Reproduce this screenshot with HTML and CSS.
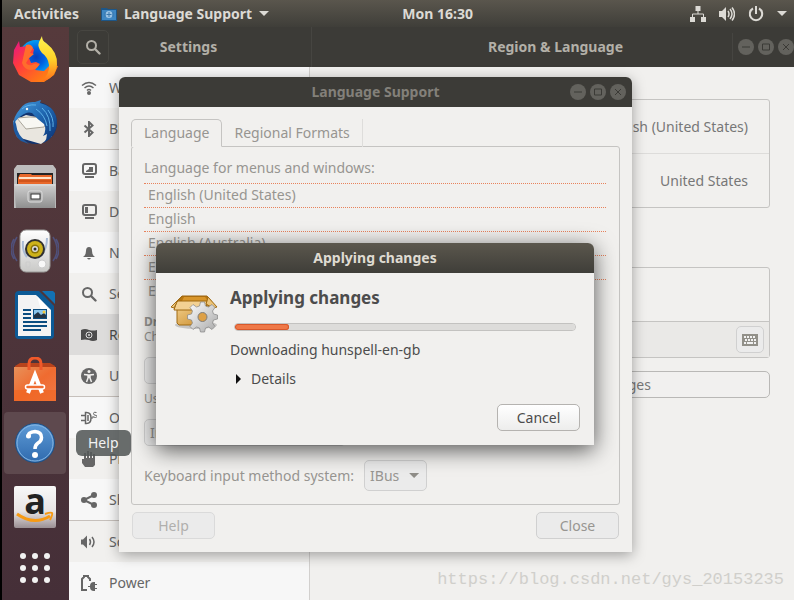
FILE: index.html
```html
<!DOCTYPE html>
<html lang="en">
<head>
<meta charset="utf-8">
<meta name="viewport" content="width=device-width, initial-scale=1">
<title>Language Support</title>
<link rel="stylesheet" href="styles.css">
</head>
<body>
<svg class="defs" aria-hidden="true">
  <defs>
    <linearGradient id="ffBody" x1="0" y1="0" x2="1" y2="1"><stop offset="0" stop-color="#e31587"/><stop offset=".35" stop-color="#ff3a3f"/><stop offset="1" stop-color="#ff9a00"/></linearGradient>
    <linearGradient id="ffTail" x1="0" y1="0" x2="0" y2="1"><stop offset="0" stop-color="#fff44f"/><stop offset=".5" stop-color="#ffd32a"/><stop offset="1" stop-color="#ff6a1a"/></linearGradient>
    <radialGradient id="ffGlobe"><stop offset="0" stop-color="#0a3fb8"/><stop offset=".5" stop-color="#0060e0"/><stop offset="1" stop-color="#00a0f5"/></radialGradient>
    <linearGradient id="tb" x1="0" y1="0" x2="1" y2="1"><stop offset="0" stop-color="#4aa0e0"/><stop offset=".5" stop-color="#1f66b0"/><stop offset="1" stop-color="#0b2f70"/></linearGradient>
    <linearGradient id="steel" x1="0" y1="0" x2="0" y2="1"><stop offset="0" stop-color="#d0d0d0"/><stop offset="1" stop-color="#8f8f8f"/></linearGradient>
    <linearGradient id="white" x1="0" y1="0" x2="0" y2="1"><stop offset="0" stop-color="#ffffff"/><stop offset="1" stop-color="#c9c9c7"/></linearGradient>
    <linearGradient id="bag" x1="0" y1="0" x2="1" y2="1"><stop offset="0" stop-color="#e8915a"/><stop offset=".5" stop-color="#ef6b30"/><stop offset="1" stop-color="#ee7a48"/></linearGradient>
    <linearGradient id="help" x1="0" y1="0" x2="0" y2="1"><stop offset="0" stop-color="#5e9bd6"/><stop offset="1" stop-color="#2f6aae"/></linearGradient>
    <linearGradient id="amz" x1="0" y1="0" x2="0" y2="1"><stop offset="0" stop-color="#f8f8f8"/><stop offset=".6" stop-color="#e8e4e4"/><stop offset="1" stop-color="#9a8f93"/></linearGradient>
    <linearGradient id="box" x1="0" y1="0" x2="1" y2="1"><stop offset="0" stop-color="#f2cf8c"/><stop offset="1" stop-color="#c98a28"/></linearGradient>
    <linearGradient id="gear" x1="0" y1="0" x2="1" y2="1"><stop offset="0" stop-color="#ffffff"/><stop offset="1" stop-color="#a8a8a8"/></linearGradient>
    <symbol id="i-search" viewBox="0 0 16 16"><circle cx="6.5" cy="6.5" r="4.5" fill="none" stroke="currentColor" stroke-width="2"/><path d="M10 10l4.5 4.5" stroke="currentColor" stroke-width="2.4" stroke-linecap="round"/></symbol>
    <symbol id="i-min" viewBox="0 0 16 16"><circle cx="8" cy="8" r="8" class="disc"/><path d="M4 8h8" class="mark"/></symbol>
    <symbol id="i-max" viewBox="0 0 16 16"><circle cx="8" cy="8" r="8" class="disc"/><path d="M4.5 5h7v6h-7z" class="mark"/></symbol>
    <symbol id="i-close" viewBox="0 0 16 16"><circle cx="8" cy="8" r="8" class="disc"/><path d="M5 5l6 6M11 5l-6 6" class="mark"/></symbol>
  </defs>
</svg>

<header class="topbar">
  <button class="top-item">Activities</button>
  <button class="top-item app-menu">
    <svg width="16" height="14" viewBox="0 0 16 14"><path d="M0 1h6l1 1h9v12H0z" fill="#1d5687"/><path d="M1 3h14v10H1z" fill="#3f87c2"/><circle cx="8" cy="7.500" r="3.500" fill="#9cc4e4"/><path d="M8 5v5M5.500 7.500h5M4 5v5M12 5v5" stroke="#3a78ad" fill="none"/></svg>
    Language Support
    <svg width="10" height="5" viewBox="0 0 10 5"><path d="M0 0h10L5 5z" fill="currentColor"/></svg>
  </button>
  <button class="top-item clock">Mon 16:30</button>
  <button class="top-item tray" aria-label="System menu">
    <svg width="16" height="16" viewBox="0 0 16 16"><path d="M5.500 0h5v5h-5zM0 11h5v5H0zM11 11h5v5h-5z" fill="currentColor"/><path d="M8 5v3M2.500 11V8h11v3" fill="none" stroke="currentColor"/></svg>
    <svg width="16" height="16" viewBox="0 0 16 16"><path d="M0 5h3l4-4v14l-4-4H0z" fill="currentColor"/><path d="M9 5q2 3 0 6M11 3q4 5 0 10M13 1.500q5 6.500 0 13" fill="none" stroke="currentColor" stroke-width="1.500"/></svg>
    <svg width="16" height="16" viewBox="0 0 16 16"><path d="M5 2.500a6.200 6.200 0 1 0 6 0M8 0v8" fill="none" stroke="currentColor" stroke-width="2"/></svg>
    <svg width="10" height="5" viewBox="0 0 10 5"><path d="M0 0h10L5 5z" fill="currentColor"/></svg>
  </button>
</header>

<main class="desktop">
  <nav class="dock" aria-label="Dock">
    <button class="launcher" aria-label="Firefox">
      <svg width="46" height="48" viewBox="0 0 46 48"><circle cx="24" cy="22" r="17" fill="url(#ffGlobe)"/><path d="M7 6l1 6 8-1 6 3-1 5-4 4 2 5 5-1 4 2-5 6 9 1 6-6 8 1-4 9-10 7H19L7 40 1 28l1-13z" fill="url(#ffBody)"/><path d="M14 10q5-2 7 3l-3 5 4 1-5 4-3 5q3 4 8 1 5 0 5 1-3 5-9 5-6-1-8-7z" fill="#ff6d2c"/><path d="M30 1q0 5 4 7 12 9 11 22-2 14-16 17 9-8 8-17-1-8-7-12-5-6-3-11z" fill="url(#ffTail)"/></svg>
    </button>
    <button class="launcher" aria-label="Thunderbird">
      <svg width="46" height="46" viewBox="0 0 46 46"><circle cx="24" cy="23" r="21" fill="#12346f"/><path d="M1 21l4 16 24 7 11-8-2-16-24-5z" fill="#e9e6df"/><path d="M5 18l9 11 18-2 6-9-20-1z" fill="#f8f7f2" stroke="#aaa69b"/><path d="M8 9q5-8 15-7l6-2-1 3q13 3 16 13 4 18-12 27 3-4 3-9l-4 2q4-6 1-12-7-5-12-11-5-2-11 3-5 3-8 10 0-9 7-17z" fill="url(#tb)"/><path d="M24 9q9 6 11 17M30 8q9 8 8 23M36 10q6 8 5 17M10 9q5-5 14-4" fill="none" stroke="#5fb2e8" stroke-width="1"/><path d="M2 19Q-1 33 9 41l8 3Q5 36 4 24z" fill="#1d5ba3"/><circle cx="15" cy="9" r="1.200" fill="#f4f4f4"/></svg>
    </button>
    <button class="launcher" aria-label="Files">
      <svg width="42" height="44" viewBox="0 0 42 44"><path d="M3 0h36l3 4v39H0V4z" fill="#bdbdbd"/><rect x="3" y="8" width="36" height="12" fill="#242424"/><path d="M4 13l2-4h11l1 1h20v9H4z" fill="#e8682a"/><path d="M5 13h32" stroke="#ffe3c8" stroke-width="2"/><path d="M5 16h32" stroke="#b9410d"/><path d="M0 19h42l-1 24H2z" fill="url(#steel)"/><path d="M1 20h40" stroke="#dedede"/><rect x="14" y="26" width="14" height="11" rx="2" fill="#aaa" stroke="#ddd"/><rect x="17" y="29" width="9" height="5" fill="#fff" stroke="#333"/></svg>
    </button>
    <button class="launcher" aria-label="Rhythmbox">
      <svg width="48" height="44" viewBox="0 0 48 44"><path d="M6 8q-8 13 0 24M42 8q8 13 0 24M3 10q-6 10 0 20M45 10q6 10 0 20" fill="none" stroke="#50507a" stroke-width="1.500"/><rect x="9" y="1" width="30" height="42" rx="6" fill="url(#white)" stroke="#9b9b99"/><path d="M36 9q0 14-9 20M12 12q-1 10 4 16" stroke="#a9bbd4" stroke-width="2" fill="none"/><circle cx="24" cy="20" r="10" fill="#303030"/><circle cx="24" cy="20" r="8" fill="#cdb21a"/><circle cx="24" cy="20" r="4.500" fill="#8a7408"/><circle cx="24" cy="20" r="3" fill="#dedede"/><circle cx="24" cy="20" r="1.500" fill="#2c2c2c"/><circle cx="31" cy="35" r="4" fill="#f8f8f8" stroke="#ccc"/><path d="M15 33h4v5h-4z" fill="none" stroke="#ccc"/></svg>
    </button>
    <button class="launcher" aria-label="LibreOffice Writer">
      <svg width="42" height="48" viewBox="0 0 42 48"><path d="M5 0h20l15 15v29q0 4-4 4H5q-4 0-4-4V4q0-4 4-4z" fill="#0c5a96"/><path d="M28 0h11l2 2v11z" fill="#1372b4"/><path d="M4 4h18l15 15v26H4z" fill="#f3f3f3"/><path d="M23 5l13 14h-9z" fill="#fff"/><path d="M9 19h8M9 23h8M9 27h8M9 31h24M9 35h24M9 39h18" stroke="#0b4d80" stroke-width="2"/><path d="M19 18h14v10H19z" fill="#0b4d80"/><path d="M20 19h12v8H20z" fill="#8ac5ec"/><path d="M20 27v-3l4-3 3 3 3-2 2 2v3z" fill="#234"/><circle cx="30" cy="21" r="1.500" fill="#f5c83a"/></svg>
    </button>
    <button class="launcher" aria-label="Ubuntu Software">
      <svg width="42" height="44" viewBox="0 0 42 44"><path d="M1 9l5-3h30l5 3v5H1z" fill="#b8431c"/><path d="M0 10h42v34H0z" fill="url(#bag)"/><path d="M0 33h42v11H0z" fill="#f0661f" opacity=".6"/><path d="M15 13V7q0-6 6-6t6 6v6" fill="none" stroke="#f0592a" stroke-width="3"/><path d="M14 36l7-18 7 18" fill="none" stroke="#fff" stroke-width="4"/><rect x="11.500" y="28" width="19" height="4" rx="2" fill="#f06a2e" stroke="#fff" stroke-width="1.500"/></svg>
    </button>
    <button class="launcher active" aria-label="Help">
      <svg width="40" height="40" viewBox="0 0 40 40"><circle cx="20" cy="20" r="19.500" fill="url(#help)" stroke="#1e5086"/><circle cx="20" cy="20" r="18" fill="none" stroke="#84b5e2"/><path d="M13.500 14q-1-5 6.500-5.500 6.500.5 6.500 6 0 3.500-3.500 5.500-3 2-3 6" fill="none" stroke="#fff" stroke-width="3.500"/><circle cx="13.500" cy="13" r="2.500" fill="#fff"/><circle cx="20" cy="32" r="3" fill="#fff"/></svg>
    </button>
    <button class="launcher" aria-label="Amazon">
      <svg width="42" height="42" viewBox="0 0 42 42"><rect width="42" height="42" rx="2" fill="url(#amz)"/><text x="21" y="28" class="amazon-mark">a</text><path d="M3 28q17 12 33 2" fill="none" stroke="#f79a13" stroke-width="3"/><path d="M31 28q6-2 7-1t-2 7" fill="none" stroke="#f79a13" stroke-width="2"/></svg>
    </button>
    <button class="launcher apps" aria-label="Show Applications">
      <svg width="30" height="30" viewBox="0 0 30 30" fill="#f2f2f2"><circle cx="3" cy="3" r="3"/><circle cx="15" cy="3" r="3"/><circle cx="27" cy="3" r="3"/><circle cx="3" cy="15" r="3"/><circle cx="15" cy="15" r="3"/><circle cx="27" cy="15" r="3"/><circle cx="3" cy="27" r="3"/><circle cx="15" cy="27" r="3"/><circle cx="27" cy="27" r="3"/></svg>
    </button>
  </nav>

  <section class="settings" aria-label="Settings">
    <header class="settings-head">
      <div class="head-side">
        <button class="search-btn" aria-label="Search"><svg width="16" height="16"><use href="#i-search"/></svg></button>
        <h2 class="title">Settings</h2>
      </div>
      <div class="head-main">
        <h2 class="title">Region &amp; Language</h2>
        <div class="controls">
          <button aria-label="Minimize"><svg><use href="#i-min"/></svg></button>
          <button aria-label="Maximize"><svg><use href="#i-max"/></svg></button>
          <button aria-label="Close window"><svg><use href="#i-close"/></svg></button>
        </div>
      </div>
    </header>
    <div class="settings-body">
      <ul class="sidebar">
        <li><svg viewBox="0 0 16 16"><path d="M1 5.500q7-6 14 0M3.500 8q4.500-4 9 0M6 10.500q2-2 4 0" fill="none" stroke="currentColor" stroke-width="1.500"/><circle cx="8" cy="13" r="2"/></svg>Wi-Fi</li>
        <li><svg viewBox="0 0 16 16"><path d="M3.500 4.500l8 7L8 15V1l3.500 3.500-8 7" fill="none" stroke="currentColor" stroke-width="2"/></svg>Bluetooth</li>
        <li class="group"><svg viewBox="0 0 16 16"><rect x="2" y="1" width="13" height="10" rx="2" fill="none" stroke="currentColor" stroke-width="2"/><path d="M5 8l3-2V4h4v5H5zM4 13h9v2H4z"/></svg>Background</li>
        <li><svg viewBox="0 0 16 16"><rect x="2" y="1" width="13" height="10" rx="2" fill="none" stroke="currentColor" stroke-width="2"/><path d="M4 3h3v6H4zM4 13h9v2H4z"/></svg>Dock</li>
        <li><svg viewBox="0 0 16 16"><path d="M2 12q3-2 3-6 0-4 3-4t3 4q0 4 3 6zM6 13h4q-2 3-4 0z"/></svg>Notifications</li>
        <li><svg><use href="#i-search"/></svg>Search</li>
        <li class="selected"><svg viewBox="0 0 16 16"><path d="M0 3q4-2 8 0 4 1 8 0v10q-4 2-8 0-4-1-8 0z"/><circle cx="8" cy="8" r="3" fill="none" stroke="#ddd"/><circle cx="8" cy="8" r="1" fill="#ddd"/></svg>Region &amp; Language</li>
        <li><svg viewBox="0 0 16 16"><circle cx="8" cy="8" r="8"/><circle cx="8" cy="3.500" r="1.500" fill="#f1f0ee"/><path d="M3 6.500l4 .5v3l-1.500 4M13 6.500L9 7v3l1.500 4M8 6.500V10" fill="none" stroke="#f1f0ee" stroke-width="1.500"/></svg>Universal Access</li>
        <li class="group"><svg viewBox="0 0 16 16"><path d="M4.500 2.500h1q4.500 0 4.500 5.500t-4.500 5.500h-1zM0 5.500h4M0 10.500h4M7 5v6" stroke="currentColor" stroke-width="1.500" fill="none"/><path d="M10 8h2V6M15.500 2.500q-3-1-3 1t3 2-1 2l-2-.5" stroke="currentColor" fill="none"/></svg>Online Accounts</li>
        <li><svg viewBox="0 0 16 16"><path d="M1 8h2V2h2v5h1V0h2v7h1V1h2v6h1V3h2v11l-2 2H4l-3-4z"/></svg>Privacy</li>
        <li><svg viewBox="0 0 16 16"><circle cx="3" cy="8" r="3"/><circle cx="13" cy="3" r="3"/><circle cx="13" cy="13" r="3"/><path d="M13 3L3 8l10 5" fill="none" stroke="currentColor" stroke-width="2"/></svg>Sharing</li>
        <li class="group"><svg viewBox="0 0 16 16"><path d="M0 5.500h2l4-4v13l-4-4H0z"/><path d="M8.500 5q2 3 0 6M11 3q4 5 0 10" fill="none" stroke="currentColor" stroke-width="1.500"/></svg>Sound</li>
        <li><svg viewBox="0 0 16 16"><path d="M6 15H1V4l2-2V1h4v1l2 2v2" fill="none" stroke="currentColor" stroke-width="2"/><path d="M7 11h2q0-4 4-4h1v2h2v1h-2v3h2v1h-2v2h-1q-4 0-4-4H7z"/></svg>Power</li>
      </ul>
      <div class="region">
        <ul class="card">
          <li><span>Language</span><span>English (United States)</span></li>
          <li><span>Formats</span><span>United States</span></li>
        </ul>
        <div class="card sources">
          <div class="source-list"></div>
          <div class="source-tools"><button class="btn key-btn" aria-label="Show keyboard layout"><svg width="16" height="12" viewBox="0 0 16 12"><path d="M0 0h16v12H0z" fill="#929089"/><path d="M2 3h12" stroke="#f1f1f1" stroke-width="2" stroke-dasharray="2 1"/><path d="M3 6h11" stroke="#f1f1f1" stroke-width="2" stroke-dasharray="2 1"/><path d="M2 9h2M5 9h6M12 9h2" stroke="#f1f1f1" stroke-width="2"/></svg></button></div>
        </div>
        <button class="btn manage">Manage Installed Languages</button>
      </div>
    </div>
  </section>

  <section class="window support" aria-label="Language Support">
    <header class="window-head">
      <h2 class="title">Language Support</h2>
      <div class="controls">
        <button aria-label="Minimize"><svg><use href="#i-min"/></svg></button>
        <button aria-label="Maximize"><svg><use href="#i-max"/></svg></button>
        <button aria-label="Close window"><svg><use href="#i-close"/></svg></button>
      </div>
    </header>
    <div class="support-body">
      <div class="tabs" role="tablist">
        <button class="tab current" role="tab" aria-selected="true">Language</button>
        <button class="tab" role="tab" aria-selected="false">Regional Formats</button>
      </div>
      <div class="panel" role="tabpanel">
        <p class="line">Language for menus and windows:</p>
        <ul class="languages">
          <li>English (United States)</li>
          <li>English</li>
          <li>English (Australia)</li>
          <li>English (Canada)</li>
          <li>English (UK)</li>
        </ul>
        <p class="note"><strong>Drag languages to arrange them in order of preference.</strong><br>Changes take effect next time you log in.</p>
        <button class="btn wide">Apply System-Wide</button>
        <p class="note">Use the same language choices for startup and login.</p>
        <button class="btn wide">Install / Remove Languages...</button>
        <div class="input-method">
          <label for="im">Keyboard input method system:</label>
          <select id="im" class="btn"><option>IBus</option></select>
        </div>
      </div>
      <div class="actions">
        <button class="btn faded">Help</button>
        <button class="btn">Close</button>
      </div>
    </div>
  </section>

  <section class="window progress-window" role="dialog" aria-label="Applying changes">
    <header class="window-head">
      <h2 class="title">Applying changes</h2>
    </header>
    <div class="progress-body">
      <svg width="48" height="48" viewBox="0 0 48 48"><ellipse cx="26" cy="38" rx="21" ry="4" fill="#000" opacity=".18"/><path d="M12 9h25l5 6H7z" fill="#b97710" stroke="#9a6410"/><path d="M14 10h21l3 4H12z" fill="#d8952a"/><path d="M7 18h32v20H9l-2-2z" fill="url(#box)" stroke="#a06a12"/><path d="M7 14h30l-1 9H4z" fill="#f3d193" stroke="#a06a12"/><path d="M37 14l1-4 9 10-4 1-7-4z" fill="#edc477" stroke="#a06a12"/><path d="M12 9l-5 6-3 6-3-1z" fill="#f0cc84" stroke="#a06a12"/><g fill="url(#gear)" stroke="#858585" stroke-width=".7"><path d="M30.500 15h4l1 4 3 1 3.500-2.500 3 3-2.500 3.500 1 3 4 1v4l-4 1-1 3 2.500 3.500-3 3-3.500-2.500-3 1-1 4h-4l-1-4-3-1-3.500 2.500-3-3 2.500-3.500-1-3-4-1v-4l4-1 1-3-2.500-3.500 3-3 3.500 2.500 3-1z"/></g><circle cx="32.500" cy="30" r="4.500" fill="#dda046" stroke="#7d7d7d"/></svg>
      <div class="progress-info">
        <h1>Applying changes</h1>
        <progress max="100" value="16" aria-label="Progress">16%</progress>
        <p>Downloading hunspell-en-gb</p>
        <details><summary>Details</summary></details>
      </div>
      <button class="btn cancel">Cancel</button>
    </div>
  </section>

  <div class="tooltip" role="tooltip">Help</div>
  <p class="watermark">https://blog.csdn.net/gys_20153235</p>
</main>
</body>
</html>
```
FILE: styles.css
```css
* { box-sizing: border-box; }

body {
  margin: 0;
  height: 100vh;
  display: flex;
  flex-direction: column;
  overflow: hidden;
  background: #000;
  color: #4c4c4c;
  font: 14px/20px "Noto Sans", "Open Sans", sans-serif;
}

h1, h2, p, ul { margin: 0; padding: 0; }
ul { list-style: none; }
button, select { font: inherit; color: inherit; }
svg { flex: none; display: block; }
.defs { position: absolute; width: 0; height: 0; }

/* Top bar */
.topbar {
  height: 27px;
  flex: none;
  position: relative;
  display: flex;
  align-items: center;
  margin-left: 2px;
  padding: 0 7px 0 12px;
  background: linear-gradient(#5a564d, #3f3e39);
  color: #dcdad5;
}
.top-item {
  display: flex;
  align-items: center;
  gap: 7px;
  padding: 0;
  border: 0;
  background: none;
  font-weight: 700;
}
.app-menu { margin-left: 22px; }
.clock {
  position: absolute;
  left: 55%;
  transform: translateX(-50%);
}
.tray { margin-left: auto; gap: 13px; }

/* Desktop */
.desktop {
  flex: 1;
  min-height: 0;
  position: relative;
  display: flex;
  margin-left: 2px;
  overflow: hidden;
}

/* Dock */
.dock {
  width: 67px;
  flex: none;
  display: flex;
  flex-direction: column;
  gap: 2px;
  padding: 1px 3px 0 2px;
  background: linear-gradient(#563a3c, #452f38);
}
.launcher {
  height: 62px;
  flex: none;
  display: grid;
  place-items: center;
  padding: 0;
  border: 0;
  border-radius: 4px;
  background: none;
}
.launcher.active { background: #5e494e; }
.launcher.apps { height: 56px; }
.amazon-mark {
  fill: #222;
  font: 700 36px "Open Sans", sans-serif;
  text-anchor: middle;
}

/* Titles and window controls */
.title {
  font-size: 14px;
  line-height: 20px;
  font-weight: 700;
  text-align: center;
}
.controls { display: flex; gap: 4px; }
.controls button {
  width: 16px;
  height: 16px;
  padding: 0;
  border: 0;
  background: none;
}
.controls svg { width: 16px; height: 16px; }
.disc { fill: #63625d; }
.mark { fill: none; stroke: #3b3a36; }

/* Settings window */
.settings {
  flex: 1;
  min-width: 0;
  margin-right: -8px;
  display: flex;
  flex-direction: column;
  background: #f1f0ee;
}
.settings-head {
  height: 40px;
  flex: none;
  display: flex;
  background: #3c3b37;
  color: #b3b0a8;
}
.head-side {
  width: 243px;
  display: flex;
  align-items: center;
  padding-left: 8px;
  border-right: 1px solid #464541;
}
.head-side .title { flex: 1; padding-right: 43px; }
.search-btn {
  width: 32px;
  height: 34px;
  display: grid;
  place-items: center;
  border: 1px solid #474641;
  border-radius: 5px;
  background: none;
}
.head-main {
  flex: 1;
  display: flex;
  align-items: center;
}
.head-main .title { flex: 1; padding-left: 67px; }
.head-main .controls {
  padding: 6px 8px 6px 5px;
  border-left: 1px solid #464541;
}
.settings-body {
  flex: 1;
  min-height: 0;
  display: flex;
}
.sidebar {
  width: 241px;
  flex: none;
  border-right: 1px solid #d2d0ce;
  background: #f7f7f7;
  color: #666;
}
.sidebar li {
  height: 41px;
  display: flex;
  align-items: center;
  gap: 12px;
  padding-left: 12px;
}
.sidebar li:nth-child(even) { background: #f1f0ee; }
.sidebar li.group {
  height: 42px;
  border-top: 1px solid #c6c0bb;
}
.sidebar li.selected { background: #dddcdb; color: #4c4c4c; }
.sidebar svg { width: 16px; height: 16px; fill: currentColor; }

.region {
  flex: 1;
  padding: 32px;
  color: #777;
}
.card {
  border: 1px solid #c5c4c2;
  border-radius: 3px;
}
.card li {
  height: 53px;
  display: flex;
  justify-content: space-between;
  align-items: center;
  padding: 0 21px;
}
.card li + li { height: 54px; border-top: 1px solid #dddcda; }
.sources { margin-top: 59px; }
.source-list { height: 54px; border-bottom: 1px solid #c5c4c2; }
.source-tools {
  display: flex;
  justify-content: flex-end;
  padding: 4px 5px;
  background: #eae9e7;
}

/* Buttons */
.btn {
  min-height: 27px;
  padding: 0 5px;
  border: 1px solid #d0d0d0;
  border-radius: 5px;
  background: #ebebeb;
}
.key-btn { width: 28px; display: grid; place-items: center; }
.manage {
  width: 100%;
  margin-top: 13px;
  border-color: #b9b8b6;
  background: #f1f0ef;
}

/* Floating windows */
.window {
  position: absolute;
  border-radius: 6px 6px 0 0;
  background: #f1f0ee;
}
.window-head {
  height: 30px;
  display: grid;
  align-items: center;
  border-radius: inherit;
}
.window-head > * { grid-area: 1 / 1; }
.window-head .controls { justify-self: end; margin-right: 6px; }

.support {
  left: 117px;
  top: 50px;
  width: 513px;
  color: #979591;
  box-shadow: 0 3px 14px rgba(0, 0, 0, .35);
}
.support .window-head { background: #3c3b37; color: #83807a; }
.support-body { padding: 12px 12px 13px; }
.tabs { display: flex; height: 28px; }
.tab {
  padding: 0 12px;
  border: 0;
  border-right: 1px solid #dedddb;
  background: none;
}
.tab.current {
  border: 1px solid #c5c4c2;
  border-bottom-color: #f1f0ee;
  border-radius: 5px 5px 0 0;
  background: #f1f0ee;
  z-index: 1;
}
.panel {
  margin-top: -1px;
  padding: 11px 13px 13px 12px;
  border: 1px solid #c5c4c2;
  border-radius: 3px;
}
.languages { margin: 5px 0 11px; }
.languages li {
  height: 24px;
  padding: 1px 4px;
  border-top: 1px dotted #e8825c;
}
.note { font-size: 12px; line-height: 15px; }
.wide {
  display: block;
  width: 202px;
  margin: 14px 0 7px;
  white-space: nowrap;
}
.note + .wide { margin-top: 13px; }
.input-method {
  display: flex;
  align-items: center;
  gap: 10px;
  margin-top: 14px;
}
.input-method select {
  width: 63px;
  height: 31px;
  appearance: none;
}
.input-method::after {
  content: "";
  width: 10px;
  height: 5px;
  margin-left: -28px;
  background: #8f8d88;
  clip-path: polygon(0 0, 100% 0, 50% 100%);
  pointer-events: none;
}
.actions {
  display: flex;
  justify-content: space-between;
  padding: 7px 1px 0;
}
.actions .btn, .cancel { width: 83px; }
.actions .faded { color: #b0afad; border-color: #dadada; }

.progress-window {
  left: 154px;
  top: 216px;
  width: 438px;
  box-shadow: 0 5px 22px rgba(0, 0, 0, .65);
}
.progress-window .window-head {
  background: linear-gradient(#5b574d, #3f3e39);
  color: #dfdbd2;
}
.progress-body {
  display: grid;
  grid-template-columns: 48px 1fr;
  column-gap: 12px;
  padding: 14px;
}
.progress-info { display: grid; gap: 9px; }
.progress-info h1 {
  font-size: 17px;
  line-height: 22px;
  font-weight: 700;
}
progress {
  appearance: none;
  height: 8px;
  width: auto;
  margin: 5px 4px 0;
  border: 1px solid #c3c2c0;
  border-radius: 4px;
  background: #dddcda;
  overflow: hidden;
}
progress::-webkit-progress-bar { background: #dddcda; }
progress::-webkit-progress-value {
  border-radius: 4px;
  background: #ef7847;
  box-shadow: inset 0 0 0 1px #d8582b;
}
summary {
  display: flex;
  align-items: center;
  gap: 10px;
  padding-left: 6px;
}
summary::before {
  content: "";
  width: 5px;
  height: 10px;
  background: #111;
  clip-path: polygon(0 0, 100% 50%, 0 100%);
}
.cancel {
  grid-column: 2;
  justify-self: end;
  margin-top: 15px;
  border-color: #b5b3b0;
  background: linear-gradient(#fff, #ededec);
}

.tooltip {
  position: absolute;
  left: 74px;
  top: 403px;
  padding: 3px 12px;
  border-radius: 6px;
  background: rgba(84, 89, 89, .88);
  color: #f2f2f2;
}
.watermark {
  position: absolute;
  right: 10px;
  bottom: 9px;
  color: #d0cfcb;
  font: 17px/22px "Liberation Mono", monospace;
}
```
